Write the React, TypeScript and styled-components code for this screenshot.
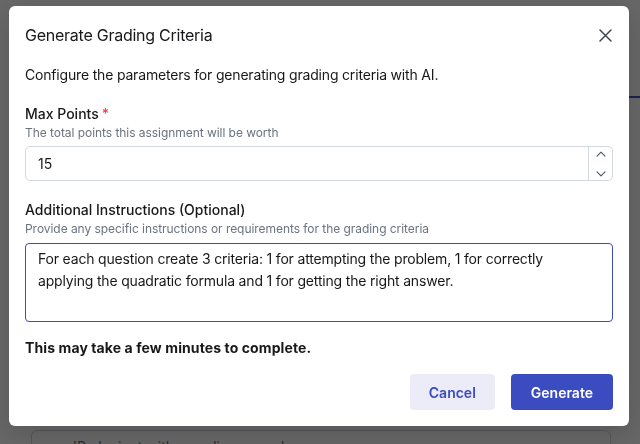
import React from "react";
import styled, { createGlobalStyle } from "styled-components";

const GlobalStyle = createGlobalStyle`
  html, body {
    margin: 0;
    padding: 0;
    width: 640px;
    height: 444px;
    overflow: hidden;
    font-family: Inter, "Liberation Sans", sans-serif;
    color: #18181b;
    background: #ffffff;
  }
  * {
    box-sizing: border-box;
  }
`;

const Page = styled.div`
  position: relative;
  width: 640px;
  height: 444px;
  overflow: hidden;
  display: flex;
  flex-direction: column;
  padding: 96px 0 0 31px;
`;

const TabLine = styled.div`
  align-self: flex-end;
  width: 40px;
  height: 2px;
  background: #4453c8;
`;

const BehindInput = styled.div`
  margin-top: auto;
  margin-bottom: -30px;
  width: 580px;
  height: 44px;
  border: 1px solid #d4d7de;
  border-radius: 6px;
  padding: 7px 12px;
  font-size: 14px;
  color: #6b7280;
`;

const Overlay = styled.div`
  position: fixed;
  inset: 0;
  background: rgba(0, 0, 0, 0.6);
  display: flex;
  align-items: flex-start;
  justify-content: flex-start;
  padding: 6px 0 0 9px;
`;

const Modal = styled.div`
  width: 620px;
  background: #ffffff;
  border-radius: 6px;
  padding: 17px 16px 16px;
  display: flex;
  flex-direction: column;
  box-shadow: 0 8px 24px rgba(0, 0, 0, 0.15);
`;

const Header = styled.div`
  display: flex;
  align-items: center;
  justify-content: space-between;
  height: 24px;
`;

const Title = styled.h2`
  margin: 0;
  font-size: 16px;
  line-height: 24px;
  font-weight: 400;
  letter-spacing: -0.25px;
  color: #18181b;
`;

const CloseButton = styled.button`
  border: none;
  background: none;
  padding: 0;
  width: 20px;
  height: 20px;
  display: flex;
  align-items: center;
  justify-content: center;
  color: #3f4654;
  margin-right: -2px;
`;

const Description = styled.p`
  margin: 18px 0 0;
  font-size: 14px;
  line-height: 20px;
  letter-spacing: -0.18px;
`;

const Field = styled.div`
  margin-top: 19px;
  display: flex;
  flex-direction: column;
`;

const Label = styled.label`
  font-size: 14px;
  line-height: 20px;
  font-weight: 500;
  color: #18181b;
`;

const Required = styled.span`
  color: #e5484d;
  margin-left: 3px;
`;

const Helper = styled.span`
  margin-top: 1px;
  font-size: 12px;
  line-height: 16px;
  letter-spacing: -0.05px;
  color: #6b7280;
`;

const NumberBox = styled.div`
  margin-top: 5px;
  height: 35px;
  display: flex;
  border: 1px solid #d3d7de;
  border-radius: 5px;
`;

const NumberValue = styled.div`
  flex: 1;
  padding: 0 12px;
  display: flex;
  align-items: center;
  font-size: 14px;
  color: #18181b;
`;

const Stepper = styled.div`
  width: 24px;
  border-left: 1px solid #d3d7de;
  display: flex;
  flex-direction: column;
  align-items: center;
  justify-content: space-between;
  padding: 4px 0 3px;
  color: #4b5563;
`;

const TextArea = styled.div`
  margin-top: 6px;
  height: 79px;
  border: 1px solid #3b4bc0;
  border-radius: 4px;
  padding: 4px 12px;
  font-size: 14px;
  line-height: 22px;
  letter-spacing: -0.18px;
  color: #18181b;
`;

const Note = styled.p`
  margin: 16px 0 0;
  font-size: 14px;
  line-height: 20px;
  font-weight: 700;
  letter-spacing: 0.1px;
`;

const Footer = styled.div`
  margin-top: 16px;
  display: flex;
  justify-content: flex-end;
  gap: 16px;
`;

const Button = styled.button<{ $primary?: boolean }>`
  height: 36px;
  padding: 0 ${(p) => (p.$primary ? "20px" : "19px")};
  border: none;
  border-radius: 4px;
  font-family: Inter, "Liberation Sans", sans-serif;
  font-size: 14px;
  font-weight: 600;
  background: ${(p) => (p.$primary ? "#3b4cc0" : "#ebecf8")};
  color: ${(p) => (p.$primary ? "#ffffff" : "#3b4bc0")};
`;

const Chevron = ({ up }: { up?: boolean }) => (
  <svg width="10" height="6" viewBox="0 0 10 6" fill="none">
    <path
      d={up ? "M1 5.2L5 1.2L9 5.2" : "M1 0.8L5 4.8L9 0.8"}
      stroke="currentColor"
      strokeWidth="1.1"
      strokeLinecap="round"
      strokeLinejoin="round"
    />
  </svg>
);

const App = () => {
  return (
    <>
      <GlobalStyle />
      <Page>
        <TabLine />
        <BehindInput>e.g. 'Be lenient with rounding errors'</BehindInput>
        <Overlay>
          <Modal>
            <Header>
              <Title>Generate Grading Criteria</Title>
              <CloseButton aria-label="Close">
                <svg width="13" height="13" viewBox="0 0 13 13" fill="none">
                  <path
                    d="M1 1L12 12M12 1L1 12"
                    stroke="currentColor"
                    strokeWidth="1.5"
                    strokeLinecap="round"
                  />
                </svg>
              </CloseButton>
            </Header>
            <Description>
              Configure the parameters for generating grading criteria with AI.
            </Description>

            <Field>
              <Label>
                Max Points<Required>*</Required>
              </Label>
              <Helper>The total points this assignment will be worth</Helper>
              <NumberBox>
                <NumberValue>15</NumberValue>
                <Stepper>
                  <Chevron up />
                  <Chevron />
                </Stepper>
              </NumberBox>
            </Field>

            <Field>
              <Label>Additional Instructions (Optional)</Label>
              <Helper>
                Provide any specific instructions or requirements for the grading
                criteria
              </Helper>
              <TextArea>
                For each question create 3 criteria: 1 for attempting the problem, 1
                for correctly applying the quadratic formula and 1 for getting the
                right answer.
              </TextArea>
            </Field>

            <Note>This may take a few minutes to complete.</Note>

            <Footer>
              <Button>Cancel</Button>
              <Button $primary>Generate</Button>
            </Footer>
          </Modal>
        </Overlay>
      </Page>
    </>
  );
};

export default App;
